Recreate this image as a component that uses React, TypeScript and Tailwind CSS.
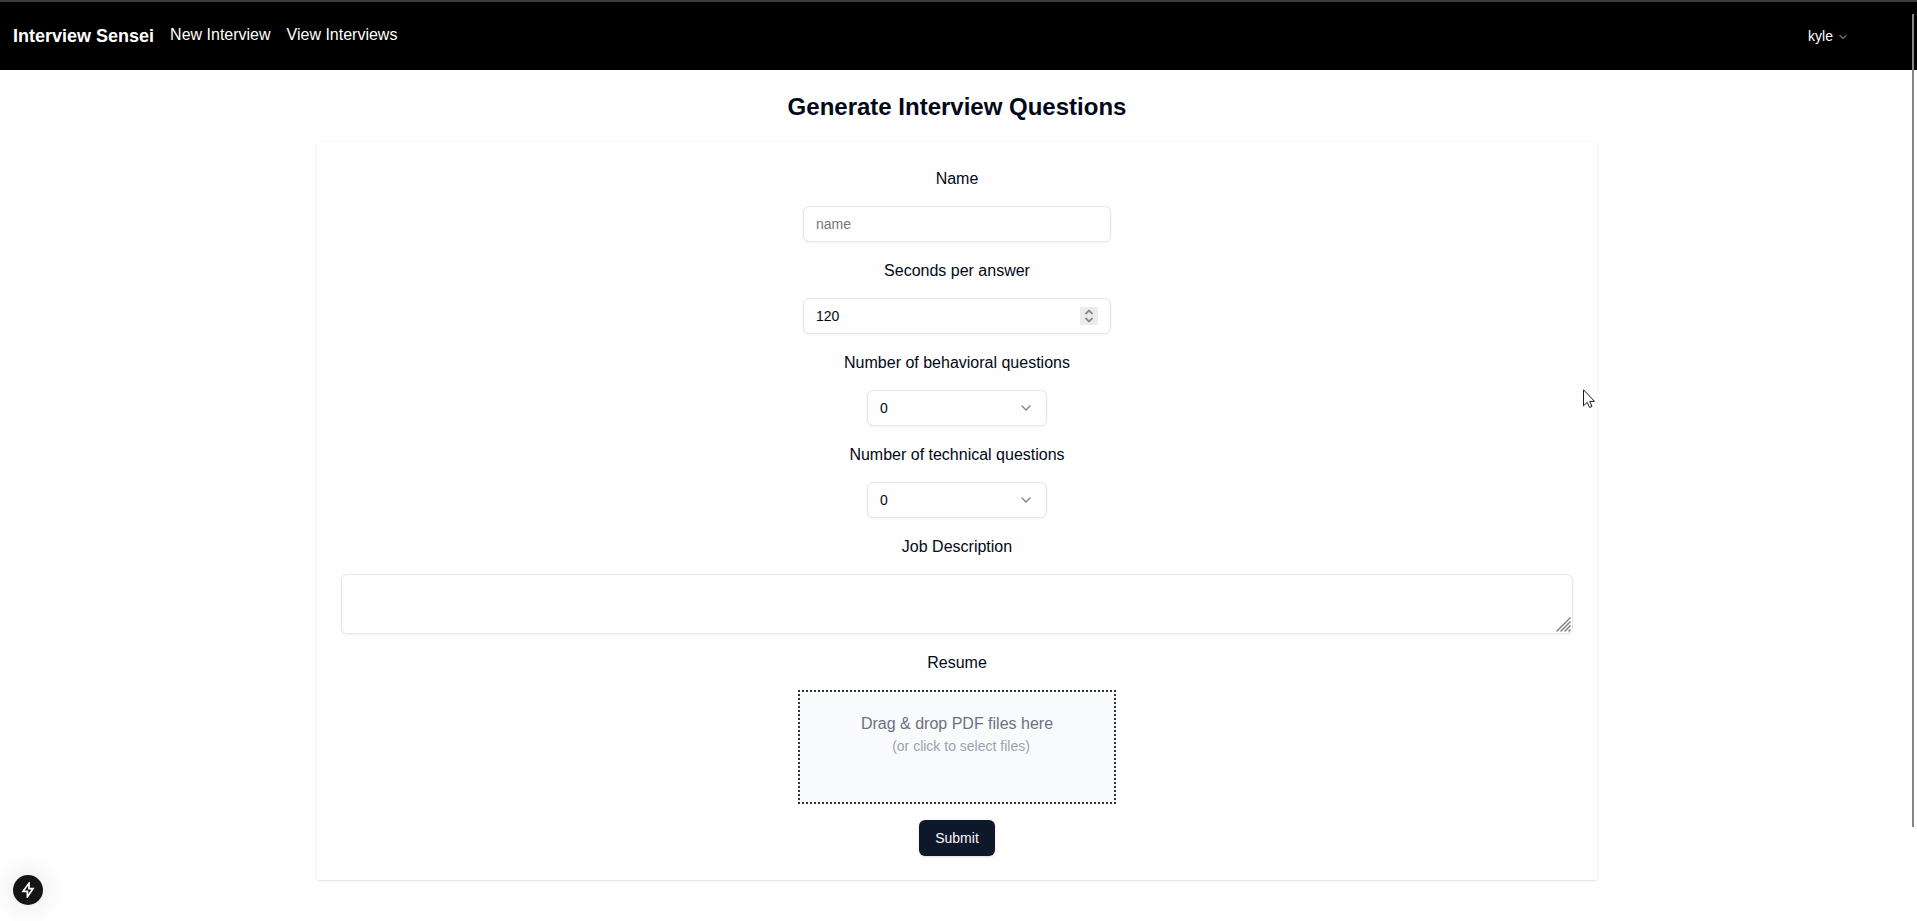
import { useState } from "react";
import type { ReactNode } from "react";
import { ChevronDown } from "lucide-react";

const controlClass =
  "h-9 rounded-md border border-[#e4e6ea] bg-transparent px-3 text-sm text-[#020817] shadow-xs outline-none placeholder:text-[#737779]";

function Field({ id, label, children }: { id: string; label: string; children: ReactNode }) {
  return (
    <>
      <label htmlFor={id} className="-mb-0.5 text-base leading-[26px]">
        {label}
      </label>
      {children}
    </>
  );
}

function CountSelect({ id }: { id: string }) {
  return (
    <div className="relative">
      <select id={id} defaultValue="0" className={`${controlClass} w-45 appearance-none`}>
        {["0", "1", "2", "3", "4", "5"].map((n) => (
          <option key={n}>{n}</option>
        ))}
      </select>
      <ChevronDown className="pointer-events-none absolute top-2.5 right-3.25 size-4 opacity-50" />
    </div>
  );
}

function NavBar() {
  return (
    <nav className="flex h-[70px] items-center border-t-2 border-[#3b3b3d] bg-black pr-[68px] pl-[13px] text-white">
      <a href="#home" className="mr-4 text-lg font-bold">
        Interview Sensei
      </a>
      <div className="flex gap-4 pb-0.5">
        <a href="#new">New Interview</a>
        <a href="#interviews">View Interviews</a>
      </div>
      <button type="button" className="ml-auto flex items-center gap-1 text-sm">
        kyle
        <ChevronDown className="mt-0.5 size-3 opacity-80" />
      </button>
    </nav>
  );
}

function StepArrow({ path }: { path: string }) {
  return (
    <svg aria-hidden="true" viewBox="0 0 10 6" className="h-1.5 w-2.5" fill="none" stroke="currentColor" strokeWidth="1.8">
      <path d={path} />
    </svg>
  );
}

export default function App() {
  const [seconds, setSeconds] = useState(120);

  return (
    <div className="min-h-screen bg-[#fefefe] pb-10 font-['Liberation_Sans',Arial,sans-serif] text-[#020817]">
      <NavBar />
      <main className="flex flex-col items-center pt-[21px] pr-[3px]">
        <h1 className="mb-[19px] text-2xl font-bold">Generate Interview Questions</h1>
        <form
          onSubmit={(e) => e.preventDefault()}
          className="flex w-full max-w-7xl flex-col items-center gap-4 p-6 shadow-[0_1px_3px_rgba(0,0,0,0.08),0_1px_2px_-1px_rgba(0,0,0,0.1)]"
        >
          <Field id="name" label="Name">
            <input id="name" type="text" placeholder="name" className={`${controlClass} w-77`} />
          </Field>

          <Field id="seconds" label="Seconds per answer">
            <div className="relative">
              <input
                id="seconds"
                type="number"
                value={seconds}
                onChange={(e) => setSeconds(Number(e.target.value))}
                className={`${controlClass} w-77 [appearance:textfield]`}
              />
              <div className="absolute top-2.25 right-3.25 flex h-4.5 w-4.5 flex-col items-center justify-center gap-0.5 bg-[#ebebeb] text-[#8a8a8a]">
                <button type="button" aria-label="Increase seconds" onClick={() => setSeconds(seconds + 1)}>
                  <StepArrow path="M1.5 5L5 1.5L8.5 5" />
                </button>
                <button type="button" aria-label="Decrease seconds" onClick={() => setSeconds(seconds - 1)}>
                  <StepArrow path="M1.5 1L5 4.5L8.5 1" />
                </button>
              </div>
            </div>
          </Field>

          <Field id="behavioral" label="Number of behavioral questions">
            <CountSelect id="behavioral" />
          </Field>

          <Field id="technical" label="Number of technical questions">
            <CountSelect id="technical" />
          </Field>

          <Field id="description" label="Job Description">
            <div className="relative flex w-full">
              <textarea
                id="description"
                className="h-15 w-full resize-none rounded-md border border-[#e4e6ea] bg-transparent px-3 py-2 text-sm shadow-xs outline-none"
              />
              <svg
                aria-hidden="true"
                viewBox="0 0 15 15"
                className="pointer-events-none absolute right-0.5 bottom-0.5 size-3.75"
                fill="none"
                stroke="#858585"
                strokeWidth="1.5"
              >
                <path d="M0.5 14.5l14-14M4.5 14.5l10-10M8.5 14.5l6-6M12.5 14.5l2-2" />
              </svg>
            </div>
          </Field>

          <Field id="resume" label="Resume">
            <label
              htmlFor="resume"
              className="flex h-[114px] w-[318px] flex-col items-center border-2 border-dotted border-[#333333] bg-[#f9fafb] pt-5"
            >
              <span className="text-base text-[#6b7280]">Drag &amp; drop PDF files here</span>
              <span className="pl-2 text-sm text-[#9ca3af]">(or click to select files)</span>
              <input id="resume" type="file" accept="application/pdf" className="sr-only" />
            </label>
          </Field>

          <button type="submit" className="h-9 rounded-md bg-[#0f172a] px-4 text-sm text-[#f8fafc] shadow-sm">
            Submit
          </button>
        </form>
      </main>

      <button
        type="button"
        aria-label="Developer tools"
        className="fixed bottom-4 left-3.25 flex size-7.5 items-center justify-center rounded-full bg-[#151515] shadow-[0_0_24px_rgba(0,0,0,0.12)]"
      >
        <svg viewBox="0 0 16 16" className="size-4" fill="none" stroke="#ffffff" strokeWidth="1.7" strokeLinejoin="miter">
          <path d="M9 1.2L3 9.3h4.4v5.5l5.6-8.1h-4z" />
        </svg>
      </button>

      <div className="fixed top-3.5 right-[3px] h-[813px] w-0.5 bg-[#858585]" />

      <svg
        aria-hidden="true"
        viewBox="0 0 12 19"
        className="pointer-events-none fixed top-[389px] left-[1583px] h-[19px] w-3"
        fill="#ffffff"
        stroke="#1a1a1a"
      >
        <path d="M0.5 0.8v16l3.7-3.5 2.4 5.2 2.4-1.1-2.3-5h4.9z" />
      </svg>
    </div>
  );
}
